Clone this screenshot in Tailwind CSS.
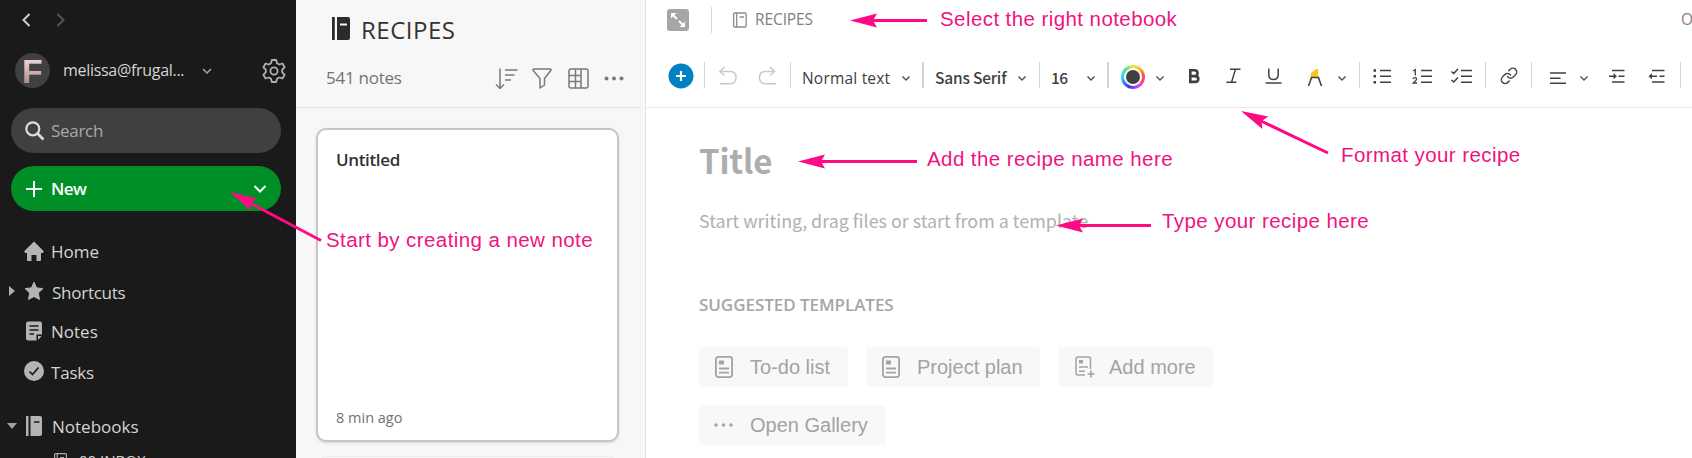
<!DOCTYPE html>
<html lang="en">
<head>
<meta charset="utf-8">
<title>Notes</title>
<script src="https://cdn.jsdelivr.net/npm/@tailwindcss/browser@4"></script>
</head>
<body class="w-[1692px] h-[458px] overflow-hidden bg-white font-['Open_Sans',sans-serif]">
<div class="relative flex w-[1692px] h-[458px] overflow-hidden">

  <!-- Sidebar -->
  <aside class="w-[296px] h-full shrink-0 bg-[#1a1a1a] text-[#d4d4d4] text-[17px] overflow-hidden">
    <div class="h-10 flex items-center pl-[21px]">
      <svg class="w-[10px] h-[16px]" viewBox="0 0 10 16" fill="none" stroke="#d0d0d0" stroke-width="2"><path d="M8.500 2 2.500 8l6 6"/></svg>
      <svg class="w-[10px] h-[16px] ml-[25px]" viewBox="0 0 10 16" fill="none" stroke="#555" stroke-width="2"><path d="M1.500 2l6 6-6 6"/></svg>
    </div>
    <div class="h-[61px] flex items-center pl-[15px]">
      <div class="w-[35px] h-[35px] rounded-full bg-[#404040] overflow-hidden flex items-center justify-center shrink-0"><span class="font-['Liberation_Sans',sans-serif] font-bold text-[34px] leading-none text-transparent bg-clip-text bg-linear-to-b from-[#f3e9e4] to-[#a87f7d]">F</span></div>
      <span class="ml-[13px] pb-px whitespace-nowrap w-[122px] shrink-0 text-[16px] tracking-[-0.3px]">melissa@frugal...</span>
      <svg class="w-[10px] h-[8px] ml-[17px] shrink-0" viewBox="0 0 10 8" fill="none" stroke="#a8a8a8" stroke-width="1.500"><path d="M1 2l4 4 4-4"/></svg>
      <svg class="w-[24px] h-[26px] ml-[50px] shrink-0" viewBox="0 0 24 26" fill="none" stroke="#b0b0b0" stroke-width="1.800" stroke-linejoin="round"><path d="M9.800 2h4.400l.8 3.200 2.200 1.300 3.200-1 2.200 3.800-2.400 2.400v2.600l2.400 2.400-2.200 3.800-3.200-1-2.200 1.300-.8 3.200H9.800L9 20.800l-2.200-1.300-3.200 1-2.200-3.800 2.400-2.400v-2.600L1.400 9.300l2.200-3.800 3.200 1L9 5.200z"/><circle cx="12" cy="13" r="3.600"/></svg>
    </div>
    <div class="ml-[11px] mt-[7px] w-[270px] h-[45px] rounded-full bg-[#404040] flex items-center pl-[14px] text-[#a8a8a8]">
      <svg class="w-[20px] h-[20px]" viewBox="0 0 20 20" fill="none" stroke="#dcdcdc" stroke-width="2.200"><circle cx="7.800" cy="7.800" r="6.500"/><path d="M12.500 12.500l6 6" stroke-width="2.600"/></svg>
      <span class="ml-[6px] tracking-[-0.3px]">Search</span>
    </div>
    <div class="ml-[11px] mt-[13px] w-[270px] h-[45px] rounded-full bg-[#008f26] flex items-center pl-[14px] text-white">
      <svg class="w-[18px] h-[18px]" viewBox="0 0 18 18" fill="none" stroke="#fff" stroke-width="2"><path d="M9 1v16M1 9h16"/></svg>
      <span class="ml-[8px] pt-px font-semibold w-[36px] tracking-[-0.5px]">New</span>
      <svg class="w-[14px] h-[10px] ml-[166px]" viewBox="0 0 14 10" fill="none" stroke="#fff" stroke-width="2"><path d="M1.500 2 7 7.500 12.500 2"/></svg>
    </div>
    <nav class="mt-[20px]">
      <div class="h-10 flex items-center pl-[24px]">
        <svg class="w-[20px] h-[20px]" viewBox="0 0 20 20" fill="#b4b4b4"><path d="M10 .4 19.800 10.300 19 12h-2v7q0 1-1 1h-3.500v-6h-5v6H4q-1 0-1-1v-7H1L.2 10.300z"/></svg>
        <span class="ml-[7px] pt-[2px]">Home</span>
      </div>
      <div class="h-10 flex items-center pl-[9px]">
        <svg class="w-[6px] h-[10px]" viewBox="0 0 6 10" fill="#b0b0b0"><path d="M0 0l6 5-6 5z"/></svg>
        <svg class="w-[20px] h-[20px] ml-[9px]" viewBox="0 0 20 20" fill="#b4b4b4" stroke="#b4b4b4" stroke-linejoin="round"><path d="M10 1.200l2.600 5.700 6.300.7-4.600 4.400 1.200 6.400L10 15.500l-5.500 2.900 1.200-6.400L1.100 7.600l6.300-.7z"/></svg>
        <span class="ml-[8px] pt-[3px] tracking-[-0.25px]">Shortcuts</span>
      </div>
      <div class="h-10 flex items-center pl-[26px]">
        <svg class="w-[16px] h-[20px]" viewBox="0 0 16 20"><path d="M2 .5h12q2 0 2 2v11h-5.500v6H2q-2 0-2-2v-15q0-2 2-2z" fill="#b4b4b4"/><path d="M12 15h3.700L12 19z" fill="#b4b4b4"/><path d="M3.500 5h9M3.500 9h9M3.500 13h4.500" stroke="#1a1a1a" stroke-width="1.500"/></svg>
        <span class="ml-[9px] pt-[2px]">Notes</span>
      </div>
      <div class="h-10 flex items-center pl-[24px]">
        <svg class="w-[20px] h-[20px]" viewBox="0 0 20 20"><circle cx="10" cy="10" r="10" fill="#b4b4b4"/><path d="M5.500 10.500l3 3 6-7" fill="none" stroke="#1a1a1a" stroke-width="1.700"/></svg>
        <span class="ml-[7px] pt-[3px] tracking-[-0.2px]">Tasks</span>
      </div>
      <div class="h-10 mt-[15px] flex items-center pl-[7px]">
        <svg class="w-[10px] h-[6px]" viewBox="0 0 10 6" fill="#a0a0a0"><path d="M0 0h10L5 6z"/></svg>
        <svg class="w-[16px] h-[20px] ml-[9px]" viewBox="0 0 16 20" fill="#b4b4b4"><path d="M0 0h2.500v20H0zM4.500 0H14q2 0 2 2v16q0 2-2 2H4.500z"/><path d="M8 6h5.500" stroke="#1a1a1a" stroke-width="1.500"/></svg>
        <span class="ml-[10px] pt-[2px]">Notebooks</span>
      </div>
      <div class="h-10 flex items-start pl-[54px] pt-[7px]">
        <svg class="w-[13px] h-[18px]" viewBox="0 0 13 18" fill="none" stroke="#a8a8a8" stroke-width="1.200"><rect x=".6" y=".6" width="11.800" height="16" rx="1"/><path d="M3.200 1v16M6 4.500h4"/></svg>
        <span class="ml-[12px] text-[15px] leading-none">00 INBOX</span>
      </div>
    </nav>
  </aside>

  <!-- Note list -->
  <section class="w-[350px] h-full shrink-0 bg-[#f7f7f7] border-r border-[#e4e4e4] overflow-hidden flex">
   <div class="w-[345px] h-full border-r border-[#f0f0f0]">
    <header class="h-[108px] border-b border-[#e4e4e4]">
      <div class="h-[56px] flex items-center pl-[36px] text-[#333]">
        <svg class="w-[18px] h-[23px]" viewBox="0 0 18 23" fill="#2b2b2b"><path d="M0 0h2.800v23H0zM5 0h11q2 0 2 2v19q0 2-2 2H5z"/><path d="M8 7.500h7" stroke="#f7f7f7" stroke-width="2"/></svg>
        <span class="ml-[11px] mt-[3px] text-[24px] leading-none tracking-[0.5px]">RECIPES</span>
      </div>
      <div class="h-[44px] flex items-center pl-[30px] text-[#737373]">
        <span class="text-[17px] w-[76px] shrink-0 whitespace-nowrap tracking-[-0.25px]">541 notes</span>
        <svg class="w-[23px] h-[22px] ml-[93px]" viewBox="495 67.500 23 22" fill="none" stroke="#7a7a7a" stroke-width="1.500"><path d="M500 69v19.500M496 85l4 4 4-4M505 70.500h12.500M505 75.500h9.500M505 80.500h6"/></svg>
        <svg class="w-[20px] h-[22px] ml-[14px]" viewBox="532 67.500 20 22" fill="none" stroke="#7a7a7a" stroke-width="1.500" stroke-linejoin="round"><path d="M534 69.500h16q1.500 0 .8 1.500l-6.300 8v6.500l-4.500 3v-9.500L533.200 71q-.7-1.500.8-1.500z"/></svg>
        <svg class="w-[21px] h-[22px] ml-[16px]" viewBox="568.500 67.500 21 22" fill="none" stroke="#7a7a7a" stroke-width="1.500"><rect x="569.500" y="69.500" width="19" height="19" rx="2"/><path d="M576 69.500v19M581.500 69.500v19M569.500 76h12M569.500 82h12"/></svg>
        <svg class="w-[20px] h-[22px] ml-[15px]" viewBox="604 67.500 20 22" fill="#7a7a7a"><circle cx="606.500" cy="79" r="2"/><circle cx="614" cy="79" r="2"/><circle cx="621.500" cy="79" r="2"/></svg>
      </div>
    </header>
    <article class="ml-[20px] mt-[20px] w-[303px] h-[314px] rounded-[10px] border-2 border-[#c6c6c6] shadow-sm bg-white flex flex-col justify-between pl-[18px] pt-[17px] pb-[11px]">
      <h2 class="text-[17px] leading-[25px] font-semibold text-[#333] w-fit tracking-[-0.35px]">Untitled</h2>
      <span class="text-[14.500px] text-[#737373] w-fit">8 min ago</span>
    </article>
    <div class="ml-[20px] mt-[14px] w-[303px] h-[20px] rounded-t-[10px] border border-[#ececec]"></div>
   </div>
  </section>

  <!-- Editor -->
  <main class="flex-1 h-full overflow-hidden">
    <header class="h-[108px] border-b border-[#e8e8e8]">
      <div class="h-[40px] flex items-center pl-[21px] text-[15.500px] text-[#808080] overflow-hidden">
        <svg class="w-[22px] h-[22px] shrink-0" viewBox="0 0 22 22"><rect width="22" height="22" rx="3" fill="#a6a6a6"/><path d="M10 10 6 6M12 12 16 16" stroke="#fff" stroke-width="1.800"/><path d="M4 4h5.500L4 9.500zM18 18h-5.500l5.500-5.500z" fill="#fff"/></svg>
        <div class="w-px h-[26px] ml-[22px] bg-[#d9d9d9] shrink-0"></div>
        <svg class="w-[14px] h-[16px] ml-[21px] shrink-0" viewBox="0 0 14 16" fill="none" stroke="#8c8c8c" stroke-width="1.300"><rect x=".7" y="1" width="12.500" height="14" rx="1"/><path d="M3.700 1v14M6.500 5h4.500"/></svg>
        <span class="ml-[8px] w-[60px] shrink-0 tracking-[-0.1px]">RECIPES</span>
        <span class="ml-[866px] shrink-0 whitespace-nowrap">Only you</span>
      </div>
      <div class="h-[30px] mt-[22px] flex items-start pl-[22px] overflow-hidden text-[15.500px] leading-[30px] text-[#404040] font-medium">
        <svg class="w-[26px] h-[30px] shrink-0" viewBox="668 62 26 30"><circle cx="681" cy="76" r="12.500" fill="#0081c2"/><path d="M681 71v10M676 76h10" stroke="#fff" stroke-width="2.200"/></svg>
        <div class="w-px h-[26px] ml-[10px] shrink-0 bg-[#d4d4d4]"></div>
        <svg class="w-[20px] h-[30px] ml-[13px] shrink-0" viewBox="718 62 20 30" fill="none" stroke="#c9c9c9" stroke-width="1.500"><path d="M724.500 67l-4.500 4.500 4.500 4M720 71.500h10q6 0 6 6t-6 6.300h-10"/></svg>
        <svg class="w-[20px] h-[30px] ml-[20px] shrink-0" viewBox="758 62 20 30" fill="none" stroke="#c9c9c9" stroke-width="1.500"><path d="M770 67l4.500 4.500-4.500 4M774.500 71.500h-9q-6 0-6 6t6 6.300h10.500"/></svg>
        <div class="w-px h-[26px] ml-[12px] shrink-0 bg-[#d4d4d4]"></div>
        <span class="ml-[11px] mt-[1px] w-[99px] h-[29px] shrink-0 whitespace-nowrap tracking-[0.2px]">Normal text</span>
        <svg class="w-[10px] h-[30px] shrink-0" viewBox="901 62 10 30" fill="none" stroke="#555" stroke-width="1.500"><path d="M902.500 76.500l3.500 3.500 3.500-3.500"/></svg>
        <div class="w-[2px] h-[26px] ml-[11px] shrink-0 bg-[#d4d4d4]"></div>
        <span class="ml-[11px] w-[82px] h-[30px] shrink-0 whitespace-nowrap tracking-[-0.2px] font-['Noto_Sans_CJK_SC',sans-serif]">Sans Serif</span>
        <svg class="w-[10px] h-[30px] shrink-0" viewBox="901 62 10 30" fill="none" stroke="#555" stroke-width="1.500"><path d="M902.500 76.500l3.500 3.500 3.500-3.500"/></svg>
        <div class="w-px h-[26px] ml-[12px] shrink-0 bg-[#d4d4d4]"></div>
        <span class="ml-[11px] w-[35px] h-[30px] shrink-0 whitespace-nowrap tracking-[-0.6px] font-['Noto_Sans_CJK_SC',sans-serif]">16</span>
        <svg class="w-[10px] h-[30px] shrink-0" viewBox="901 62 10 30" fill="none" stroke="#555" stroke-width="1.500"><path d="M902.500 76.500l3.500 3.500 3.500-3.500"/></svg>
        <div class="w-[2px] h-[26px] ml-[11px] shrink-0 bg-[#d4d4d4]"></div>
        <div class="w-[24px] h-[24px] ml-[12px] mt-[3px] shrink-0 rounded-full bg-[conic-gradient(#e8f23a,#ffb52e_12%,#ff4d4d_22%,#ff3fae_35%,#b04cff_45%,#3d35e8_56%,#2f7dff_65%,#35d6ff_76%,#4fe08a_88%,#e8f23a)] flex items-center justify-center"><div class="w-[18px] h-[18px] rounded-full bg-white flex items-center justify-center"><div class="w-[14px] h-[14px] rounded-full bg-[#404040]"></div></div></div>
        <svg class="w-[10px] h-[30px] ml-[10px] shrink-0" viewBox="901 62 10 30" fill="none" stroke="#555" stroke-width="1.500"><path d="M902.500 76.500l3.500 3.500 3.500-3.500"/></svg>
        <svg class="w-[14px] h-[30px] ml-[22px] shrink-0" viewBox="1187 62 14 30" fill="none" stroke="#404040" stroke-width="2.600"><path d="M1190.300 70.300h4.200q3 0 3 2.900t-3 2.900h-4.200zM1190.300 76.100h4.700q3.300 0 3.300 2.900t-3.300 2.900h-4.700z"/></svg>
        <svg class="w-[16px] h-[30px] ml-[25px] shrink-0" viewBox="1226 62 16 30" fill="none" stroke="#404040" stroke-width="1.400"><path d="M1230 69.300h10.500M1226.500 82.300h10M1235.500 69.300l-4 13"/></svg>
        <svg class="w-[17px] h-[30px] ml-[23px] shrink-0" viewBox="1265 62 17 30" fill="none" stroke="#404040" stroke-width="1.500"><path d="M1268.800 68.500v6q0 5 4.700 5t4.700-5v-6M1265.500 83h16"/></svg>
        <svg class="w-[16px] h-[30px] ml-[25px] shrink-0" viewBox="1307 62 16 30" fill="none" stroke="#404040" stroke-width="1.600"><path d="M1310.500 77v-3.500l5.500-4.500q2.200-.8 2.200 1.200V77z" fill="#fcc61a" stroke="none"/><path d="M1308.500 86l2-5.500 1-3h7l1 3 2 5.500"/></svg>
        <svg class="w-[10px] h-[30px] ml-[14px] shrink-0" viewBox="901 62 10 30" fill="none" stroke="#555" stroke-width="1.500"><path d="M902.500 76.500l3.500 3.500 3.500-3.500"/></svg>
        <div class="w-px h-[26px] ml-[12px] shrink-0 bg-[#d4d4d4]"></div>
        <svg class="w-[20px] h-[30px] ml-[12px] shrink-0" viewBox="1372 62 20 30" fill="none" stroke="#404040" stroke-width="1.500"><path d="M1380 70.500h11M1380 76.300h11M1380 82.300h11"/><path d="M1373.500 70.500h2.500M1373.500 76.300h2.500M1373.500 82.300h2.500" stroke-width="2.500"/></svg>
        <svg class="w-[21px] h-[30px] ml-[20px] shrink-0" viewBox="1412 62 21 30" fill="none" stroke="#404040" stroke-width="1.500"><path d="M1421 70.500h11M1421 76.300h11M1421 82.300h11"/><path d="M1413 71l2.300-1.300V75.500M1413 79q.3-1.300 1.900-1.300 1.700 0 1.700 1.400 0 1-3.300 3.900h3.700" stroke-width="1.300"/></svg>
        <svg class="w-[22px] h-[30px] ml-[18px] shrink-0" viewBox="1451 62 22 30" fill="none" stroke="#404040" stroke-width="1.500"><path d="M1461 70.500h11M1461 76.300h11M1461 82.300h11M1451.500 71.500l2.200 2 4.300-4.500M1451.500 80l2.200 2 4.300-4.500"/></svg>
        <div class="w-px h-[26px] ml-[12px] shrink-0 bg-[#d4d4d4]"></div>
        <svg class="w-[20px] h-[30px] ml-[13px] shrink-0" viewBox="-1 -6 26 39" fill="none" stroke="#505050" stroke-width="2" stroke-linecap="round"><path d="M10 13a5 5 0 0 0 7.540.54l3-3a5 5 0 0 0-7.070-7.070l-1.720 1.710M14 11a5 5 0 0 0-7.540-.54l-3 3a5 5 0 0 0 7.070 7.070l1.710-1.710"/></svg>
        <div class="w-px h-[26px] ml-[12px] shrink-0 bg-[#d4d4d4]"></div>
        <svg class="w-[18px] h-[30px] ml-[17px] shrink-0" viewBox="1549 62 18 30" fill="none" stroke="#404040" stroke-width="1.500"><path d="M1550 73h16M1550 78.200h10.500M1550 83.300h16"/></svg>
        <svg class="w-[10px] h-[30px] ml-[12px] shrink-0" viewBox="901 62 10 30" fill="none" stroke="#555" stroke-width="1.500"><path d="M902.500 76.500l3.500 3.500 3.500-3.500"/></svg>
        <svg class="w-[18px] h-[30px] ml-[19px] shrink-0" viewBox="1608 62 18 30" fill="none" stroke="#404040" stroke-width="1.500"><path d="M1612 70.500h12.500M1618.500 76.300h6M1612 82h12.500M1609 76.300h6"/><path d="M1613.500 73.300l3.500 3-3.500 3z" fill="#404040" stroke="none"/></svg>
        <svg class="w-[18px] h-[30px] ml-[21px] shrink-0" viewBox="1647 62 18 30" fill="none" stroke="#404040" stroke-width="1.500"><path d="M1652 70.500h12.500M1659.500 76.300h5M1652 82h12.500M1651 76.300h6"/><path d="M1652 73.300l-3.500 3 3.500 3z" fill="#404040" stroke="none"/></svg>
        <div class="w-px h-[26px] ml-[15px] shrink-0 bg-[#d4d4d4]"></div>
      </div>
    </header>
    <div class="pl-[53px] pt-[32px]">
      <h1 class="w-fit font-['Noto_Sans_CJK_SC',sans-serif] font-semibold text-[33px] leading-[40px] text-[#adadad] tracking-[-0.2px]">Title</h1>
      <p class="w-fit mt-[26px] font-['Noto_Sans_CJK_SC',sans-serif] text-[17.900px] leading-[28px] text-[#b0b0b0] whitespace-nowrap">Start writing, drag files or start from a template</p>
      <h2 class="w-fit mt-[58px] text-[17px] leading-[26px] font-semibold text-[#a6a6a6] whitespace-nowrap tracking-[-0.05px]">SUGGESTED TEMPLATES</h2>
      <div class="mt-[29px] w-[600px] flex flex-wrap gap-x-[18px] gap-y-[18px] font-['Liberation_Sans',sans-serif] text-[20px] text-[#a3a3a3]">
        <div class="h-[40px] w-[149px] rounded-[4px] bg-[#f8f8f8] flex items-center pl-[16px]">
          <svg class="w-[18px] h-[22px]" viewBox="0 0 18 22" fill="none" stroke="#a3a3a3" stroke-width="1.800"><rect x=".9" y=".9" width="16.200" height="20.200" rx="2.500"/><path d="M4 12.500h10M4 16.700h10"/><path d="M4 4.500h5v4H4z" fill="#a3a3a3" stroke="none"/></svg>
          <span class="ml-[17px] whitespace-nowrap">To-do list</span>
        </div>
        <div class="h-[40px] w-[174px] rounded-[4px] bg-[#f8f8f8] flex items-center pl-[16px]">
          <svg class="w-[18px] h-[22px]" viewBox="0 0 18 22" fill="none" stroke="#a3a3a3" stroke-width="1.800"><rect x=".9" y=".9" width="16.200" height="20.200" rx="2.500"/><path d="M4 12.500h10M4 16.700h10"/><path d="M4 4.500h5v4H4z" fill="#a3a3a3" stroke="none"/></svg>
          <span class="ml-[17px] whitespace-nowrap">Project plan</span>
        </div>
        <div class="h-[40px] w-[155px] rounded-[4px] bg-[#f8f8f8] flex items-center pl-[17px]">
          <svg class="w-[20px] h-[22px]" viewBox="0 0 20 22" fill="none" stroke="#a3a3a3" stroke-width="1.500"><path d="M10 19H3q-2 0-2-2V3q0-2 2-2h10.500q2 0 2 2v10M4 11h9M4 15.200h6"/><path d="M4 4h4v3.500H4z" fill="#a3a3a3" stroke="none"/><path d="M16 14.500v7M12.500 18h7" stroke-width="1.700"/></svg>
          <span class="ml-[14px] whitespace-nowrap">Add more</span>
        </div>
        <div class="h-[40px] w-[187px] rounded-[4px] bg-[#f8f8f8] flex items-center pl-[15px]">
          <svg class="w-[20px] h-[6px]" viewBox="0 0 20 6" fill="#a3a3a3"><circle cx="2" cy="3" r="1.800"/><circle cx="9.500" cy="3" r="1.800"/><circle cx="17" cy="3" r="1.800"/></svg>
          <span class="ml-[16px] pb-px whitespace-nowrap">Open Gallery</span>
        </div>
      </div>
    </div>
  </main>

  <!-- Annotations laid over the page -->
  <div class="absolute inset-0 font-['Liberation_Sans',sans-serif] text-[20.500px] leading-[24px] tracking-[0.42px] text-[#ee1480] whitespace-nowrap">
    <svg class="absolute inset-0 w-[1692px] h-[458px]" viewBox="0 0 1692 458">
      <defs><path id="head" d="M0 0 27-7 23 0l4 7z" fill="#ff0a84"/></defs>
      <g stroke="#ff0a84" stroke-width="3">
        <path d="M870 20.500h57M820 161.500h97M1078 225.500h73M1260 120.500l68 32.500M250 203l71 37.500"/>
      </g>
      <use href="#head" transform="translate(850 20.500)"/>
      <use href="#head" transform="translate(798 161.500)"/>
      <use href="#head" transform="translate(1056 225.500)"/>
      <use href="#head" transform="translate(1241 111) rotate(25.700)"/>
      <use href="#head" transform="translate(230 192) rotate(28)"/>
    </svg>
    <span class="absolute left-[940px] top-[7px]">Select the right notebook</span>
    <span class="absolute left-[927px] top-[147px]">Add the recipe name here</span>
    <span class="absolute left-[326px] top-[228px]">Start by creating a new note</span>
    <span class="absolute left-[1341px] top-[143px]">Format your recipe</span>
    <span class="absolute left-[1162px] top-[209px]">Type your recipe here</span>
  </div>
</div>
</body>
</html>
